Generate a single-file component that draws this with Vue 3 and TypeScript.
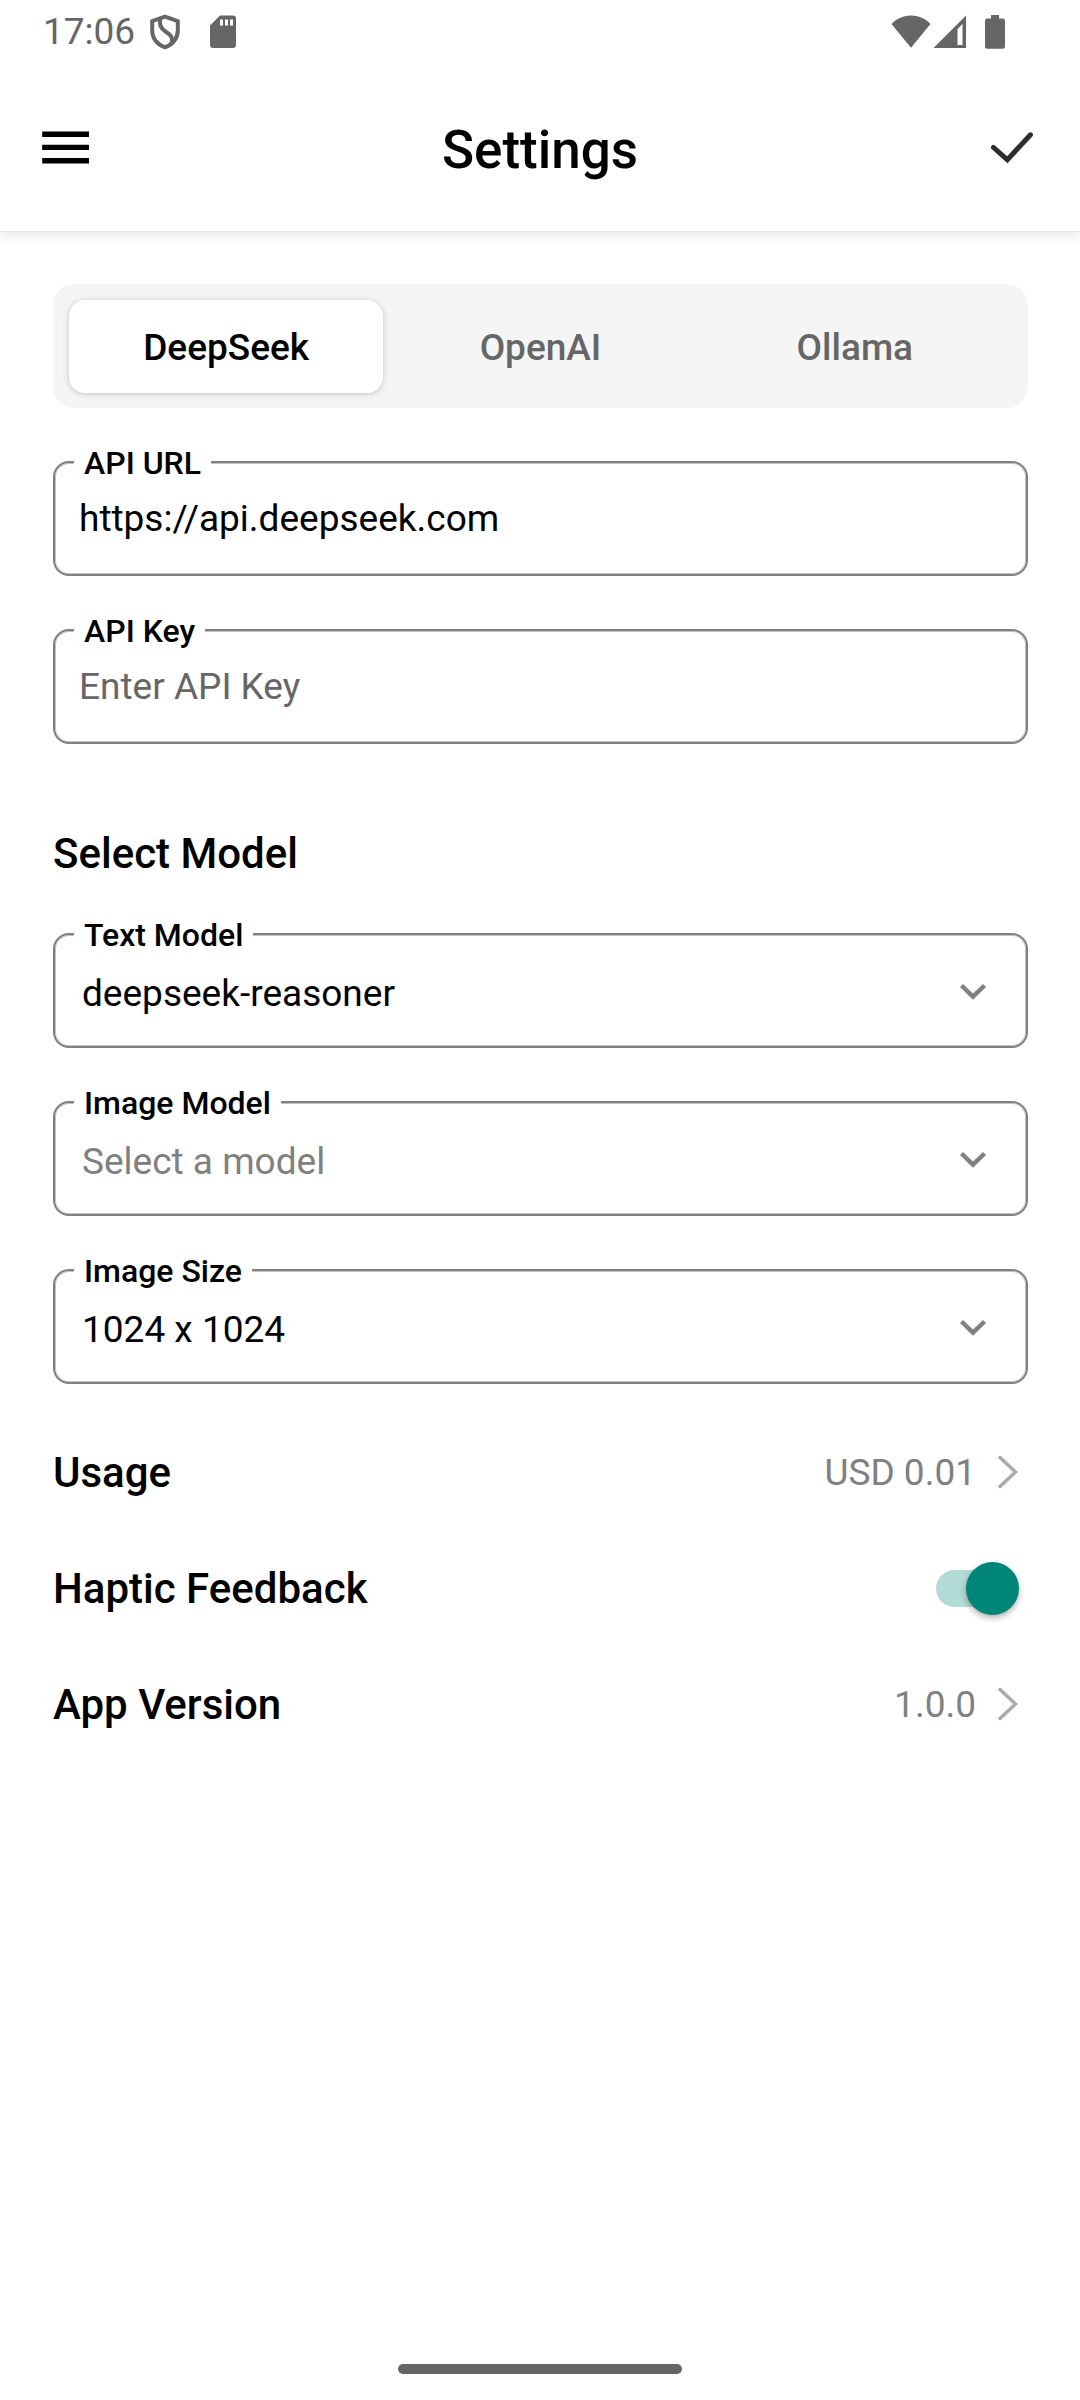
<script setup lang="ts">
import { ref } from 'vue'

type Provider = 'DeepSeek' | 'OpenAI' | 'Ollama'

const providers: Provider[] = ['DeepSeek', 'OpenAI', 'Ollama']
const provider = ref<Provider>('DeepSeek')
const apiUrl = ref('https://api.deepseek.com')
const apiKey = ref('')
const haptic = ref(true)

interface ModelField {
  id: string
  label: string
  value: string
  placeholder?: string
  options: string[]
}

const fields = ref<ModelField[]>([
  { id: 'text-model', label: 'Text Model', value: 'deepseek-reasoner', options: ['deepseek-reasoner'] },
  { id: 'image-model', label: 'Image Model', value: '', placeholder: 'Select a model', options: [] },
  { id: 'image-size', label: 'Image Size', value: '1024 x 1024', options: ['1024 x 1024'] },
])
</script>

<template>
  <div class="page">
    <div class="status">
      <span class="time">17:06</span>
      <svg class="shield" width="32" height="36" viewBox="0 0 32 36" fill="none" stroke="#666" stroke-width="4" aria-hidden="true">
        <path d="M16 2.6 3.2 7.2v9.3C3.2 24.500 8.600 31 16 33.300 23.400 31 28.800 24.500 28.800 16.500V7.200Z" />
        <path d="M11.500 4.500C9.500 11 12 14.500 16.500 17.500 22 21 24.500 24 22.500 29.500" />
      </svg>
      <svg class="sd" width="26" height="34" viewBox="0 0 26 34" aria-hidden="true">
        <path fill="#666" fill-rule="evenodd" d="M10 0.500h13a3 3 0 0 1 3 3V30a3 3 0 0 1-3 3H3a3 3 0 0 1-3-3V10.500ZM10 4.500v6h3v-6Zm5 0v6h3v-6Zm5 0v6h3v-6Z" />
      </svg>
      <span class="spacer"></span>
      <svg width="40" height="34" viewBox="0 0 40 34" aria-hidden="true">
        <path fill="#666" d="M0.500 9C11-2.500 29-2.500 39.500 9L20 32.800Z" />
      </svg>
      <svg class="signal" width="34" height="34" viewBox="0 0 34 34" aria-hidden="true">
        <path fill="#666" fill-rule="evenodd" d="M33 0.500V33H0.500ZM29.500 9 24.500 14v16h5Z" />
      </svg>
      <svg class="battery" width="20" height="34" viewBox="0 0 20 34" aria-hidden="true">
        <path fill="#666" d="M6 0h8v3.500h3.500a2.500 2.500 0 0 1 2.500 2.500V31.300a2.500 2.500 0 0 1-2.500 2.500h-15A2.500 2.500 0 0 1 0 31.300V6a2.500 2.500 0 0 1 2.500-2.500H6Z" />
      </svg>
    </div>

    <header class="bar">
      <button class="icon-btn" type="button" aria-label="Menu">
        <svg width="48" height="34" viewBox="0 0 48 34" fill="#000">
          <path d="M0.200 0.500h46.800v5.500H0.200ZM0.200 13.800h46.800v5.300H0.200ZM0.200 27h46.800v5.500H0.200Z" />
        </svg>
      </button>
      <h1>Settings</h1>
      <button class="icon-btn" type="button" aria-label="Save">
        <svg width="44" height="34" viewBox="0 0 44 34" fill="none" stroke="#2d2d2d" stroke-width="5" stroke-linecap="round">
          <path d="M3.500 16.500 17.300 28.700 40.500 3.800" />
        </svg>
      </button>
    </header>

    <main>
      <div class="tabs" role="tablist">
        <button
          v-for="name in providers"
          :key="name"
          class="tab"
          :class="{ active: name === provider }"
          type="button"
          role="tab"
          :aria-selected="name === provider"
          @click="provider = name"
        >{{ name }}</button>
      </div>

      <div class="fields">
        <div class="field">
          <label for="api-url">API URL</label>
          <input id="api-url" v-model="apiUrl" type="text" />
        </div>
        <div class="field">
          <label for="api-key">API Key</label>
          <input id="api-key" v-model="apiKey" type="text" placeholder="Enter API Key" />
        </div>
      </div>

      <h2 class="section">Select Model</h2>

      <div class="fields">
        <div v-for="f in fields" :key="f.id" class="field">
          <label :for="f.id">{{ f.label }}</label>
          <select :id="f.id" v-model="f.value" :class="{ empty: !f.value }">
            <option v-if="f.placeholder" value="" disabled>{{ f.placeholder }}</option>
            <option v-for="o in f.options" :key="o">{{ o }}</option>
          </select>
          <svg class="chevron" width="28" height="18" viewBox="0 0 28 18" fill="none" stroke="#808080" stroke-width="4.500" aria-hidden="true">
            <path d="M2.500 2.500 14 13.700 25.500 2.500" />
          </svg>
        </div>
      </div>

      <div class="rows">
        <a class="row" href="#usage">
          <span class="name">Usage</span>
          <span class="value">USD 0.01</span>
          <svg width="22" height="34" viewBox="0 0 22 34" fill="none" stroke="#aaa" stroke-width="3.500" stroke-linecap="round" aria-hidden="true">
            <path d="M3 2.500 18.500 17 3 31.500" />
          </svg>
        </a>
        <div class="row">
          <label class="name" for="haptic">Haptic Feedback</label>
          <input id="haptic" v-model="haptic" class="switch" type="checkbox" role="switch" />
        </div>
        <a class="row" href="#version">
          <span class="name">App Version</span>
          <span class="value">1.0.0</span>
          <svg width="22" height="34" viewBox="0 0 22 34" fill="none" stroke="#aaa" stroke-width="3.500" stroke-linecap="round" aria-hidden="true">
            <path d="M3 2.500 18.500 17 3 31.500" />
          </svg>
        </a>
      </div>
    </main>

    <div class="nav"><span class="pill"></span></div>
  </div>
</template>

<style>
body {
  background: #fff;
}
</style>

<style scoped>
.page {
  display: flex;
  flex-direction: column;
  min-height: 100vh;
  background: #fff;
  color: #000;
  font-family: Roboto, "Liberation Sans", sans-serif;
}

.page *,
.page *::before,
.page *::after {
  box-sizing: border-box;
}

svg {
  display: block;
  flex: none;
}

button,
input,
select {
  margin: 0;
  padding: 0;
  border: 0;
  background: none;
  color: inherit;
  font: inherit;
  outline: none;
}

/* Status bar */
.status {
  display: flex;
  align-items: center;
  height: 64px;
  padding: 0 75px 0 43px;
  color: #666;
}

.time {
  font-size: 37px;
  line-height: 64px;
}

.shield {
  margin-left: 14px;
}

.sd {
  margin-left: 29px;
}

.spacer {
  flex: 1;
}

.signal {
  margin-left: 2px;
}

.battery {
  margin-left: 18px;
}

/* App bar */
.bar {
  display: flex;
  align-items: center;
  justify-content: space-between;
  height: 167px;
  padding: 0 42px;
  box-shadow: 0 0 2px rgba(0, 0, 0, 0.14), 0 4px 14px rgba(0, 0, 0, 0.1);
  clip-path: inset(0 0 -30px 0);
}

.icon-btn {
  display: flex;
  width: 56px;
}

.icon-btn:last-child {
  justify-content: flex-end;
  padding-right: 4px;
}

h1 {
  margin: 0;
  padding-top: 4px;
  font-size: 53px;
  font-weight: 500;
  line-height: 64px;
}

main {
  flex: 1;
  padding: 53px 52px 0 53px;
}

/* Provider tabs */
.tabs {
  display: flex;
  padding: 16px 16px 15px;
  border-radius: 21px;
  background: #f5f5f5;
}

.tab {
  flex: 1;
  height: 93px;
  padding-top: 2px;
  border-radius: 16px;
  color: #666;
  font-size: 37px;
  font-weight: 500;
}

.tab.active {
  background: #fff;
  color: #000;
  box-shadow: 0 1px 6px rgba(0, 0, 0, 0.2);
}

/* Outlined fields */
.fields {
  display: flex;
  flex-direction: column;
  gap: 53px;
  padding-top: 53px;
}

.field {
  position: relative;
  height: 115px;
  border: 2px solid #808080;
  border-radius: 16px;
  box-shadow: inset 0 0 0 1px #c4c4c4;
}

.field label {
  position: absolute;
  top: -20px;
  left: 19px;
  padding: 0 10px;
  background: #fff;
  font-size: 32px;
  font-weight: 500;
  line-height: 40px;
}

.field input,
.field select {
  display: block;
  width: 100%;
  height: 111px;
  font-size: 37px;
}

.field input {
  padding: 0 24px 1px;
}

.field input::placeholder {
  color: #666;
  opacity: 1;
}

.field select {
  padding: 5px 100px 0 27px;
  appearance: none;
}

.field select.empty {
  color: #808080;
}

.chevron {
  position: absolute;
  top: 48px;
  right: 39px;
  pointer-events: none;
}

.section {
  margin: 84px 0 0;
  font-size: 42px;
  font-weight: 500;
  line-height: 52px;
}

/* Preference rows */
.rows {
  padding-top: 30px;
}

.row {
  display: flex;
  align-items: center;
  height: 116px;
  padding-right: 9px;
  color: inherit;
  text-decoration: none;
}

.name {
  flex: 1;
  font-size: 42px;
  font-weight: 500;
}

.value {
  margin-right: 21px;
  color: #808080;
  font-size: 37px;
}

.switch {
  position: relative;
  width: 83px;
  height: 53px;
  appearance: none;
}

.switch::before {
  content: "";
  position: absolute;
  top: 8px;
  left: 0;
  width: 76px;
  height: 37px;
  border-radius: 19px;
  background: #b2dbd6;
}

.switch::after {
  content: "";
  position: absolute;
  top: 0;
  left: 0;
  width: 53px;
  height: 53px;
  border-radius: 50%;
  background: #008577;
  box-shadow: 0 3px 6px rgba(0, 0, 0, 0.3);
}

.switch:checked::after {
  left: 30px;
}

/* Gesture bar */
.nav {
  display: flex;
  justify-content: center;
  padding-bottom: 26px;
}

.pill {
  width: 284px;
  height: 10px;
  border-radius: 5px;
  background: #666;
}
</style>
